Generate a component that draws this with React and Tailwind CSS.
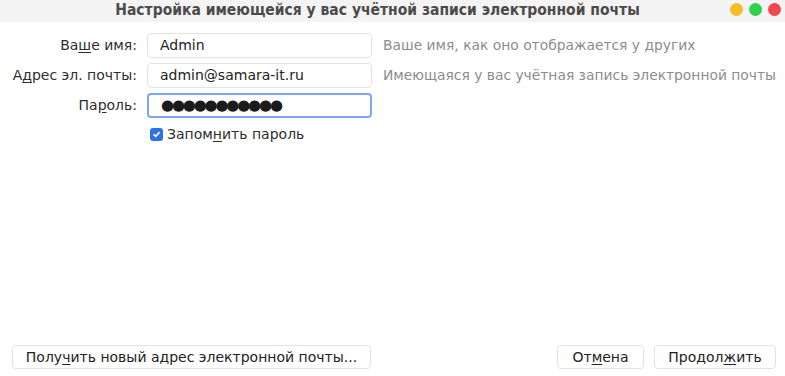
const fields = [
  { pre: 'Ва', key: 'ш', post: 'е имя:', value: 'Admin', hint: 'Ваше имя, как оно отображается у других' },
  { pre: 'А', key: 'д', post: 'рес эл. почты:', value: 'admin@samara-it.ru', hint: 'Имеющаяся у вас учётная запись электронной почты' },
];

const Mn = ({ pre, k, post }) => (
  <span>
    {pre}
    <span className="underline underline-offset-2">{k}</span>
    {post}
  </span>
);

const App = () => {
  return (
    <div className="w-[785px] h-[376px] bg-white flex flex-col overflow-hidden text-[14px] text-[#2e2e2e] font-['DejaVu_Sans',sans-serif]">
      {/* Title bar */}
      <div className="h-[22px] bg-[#f4f4f4] flex items-center relative shrink-0">
        <div className="flex-1 text-center font-['DejaVu_Sans_Condensed','DejaVu_Sans',sans-serif] font-bold text-[15.5px] text-[#4b4b4b] pr-[30px] whitespace-nowrap">
          Настройка имеющейся у вас учётной записи электронной почты
        </div>
        <div className="absolute right-[4px] top-[3px] flex gap-[6px]">
          <span className="w-[13px] h-[13px] rounded-full bg-[#f6bd2a]" />
          <span className="w-[13px] h-[13px] rounded-full bg-[#2fd24a]" />
          <span className="w-[13px] h-[13px] rounded-full bg-[#f2474d]" />
        </div>
      </div>

      {/* Form */}
      <div className="grid grid-cols-[137px_225px_1fr] gap-x-[10px] gap-y-[5px] mt-[11px] items-center">
        {fields.map((f) => (
          <div key={f.value} className="contents">
            <div className="text-right">
              <Mn pre={f.pre} k={f.key} post={f.post} />
            </div>
            <div className="h-[25px] border border-[#e3e3e3] rounded-[4px] flex items-center px-[12px] text-[#222]">
              {f.value}
            </div>
            <div className="text-[#8c8c8c] text-[13.85px] pl-[1px] whitespace-nowrap">{f.hint}</div>
          </div>
        ))}
        <div className="text-right">
          <Mn pre="Па" k="р" post="оль:" />
        </div>
        <div className="h-[25px] border-2 border-[#7ea6f2] rounded-[4px] flex items-center px-[12px] text-[#1b1b1b] text-[15px] tracking-[-2.2px]">
          ●●●●●●●●●●●
        </div>
        <div />
        <div />
        <label className="flex items-center gap-[4px] mt-[1px] pl-[3px]">
          <span className="w-[13px] h-[13px] rounded-[3px] bg-[#2f72e6] flex items-center justify-center">
            <svg viewBox="0 0 12 12" className="w-[9px] h-[9px]" fill="none" stroke="white" strokeWidth="2" strokeLinecap="round" strokeLinejoin="round">
              <path d="M2.5 6.2l2.4 2.3 4.6-5" />
            </svg>
          </span>
          <Mn pre="Запом" k="н" post="ить пароль" />
        </label>
        <div />
      </div>

      <div className="flex-1" />

      {/* Buttons */}
      <div className="flex items-center px-[12px] pb-[7px]">
        <button className="h-[24px] w-[359px] border border-[#e3e3e3] rounded-[4px] bg-white text-[#222]">
          <Mn pre="Полу" k="ч" post="ить новый адрес электронной почты..." />
        </button>
        <div className="flex-1" />
        <button className="h-[24px] w-[87px] border border-[#e3e3e3] rounded-[4px] bg-white text-[#222]">
          <Mn pre="От" k="м" post="ена" />
        </button>
        <button className="h-[24px] w-[122px] ml-[10px] mr-[-3px] border border-[#e3e3e3] rounded-[4px] bg-white text-[#222]">
          <Mn pre="Продол" k="ж" post="ить" />
        </button>
      </div>
    </div>
  );
};

export default App;
